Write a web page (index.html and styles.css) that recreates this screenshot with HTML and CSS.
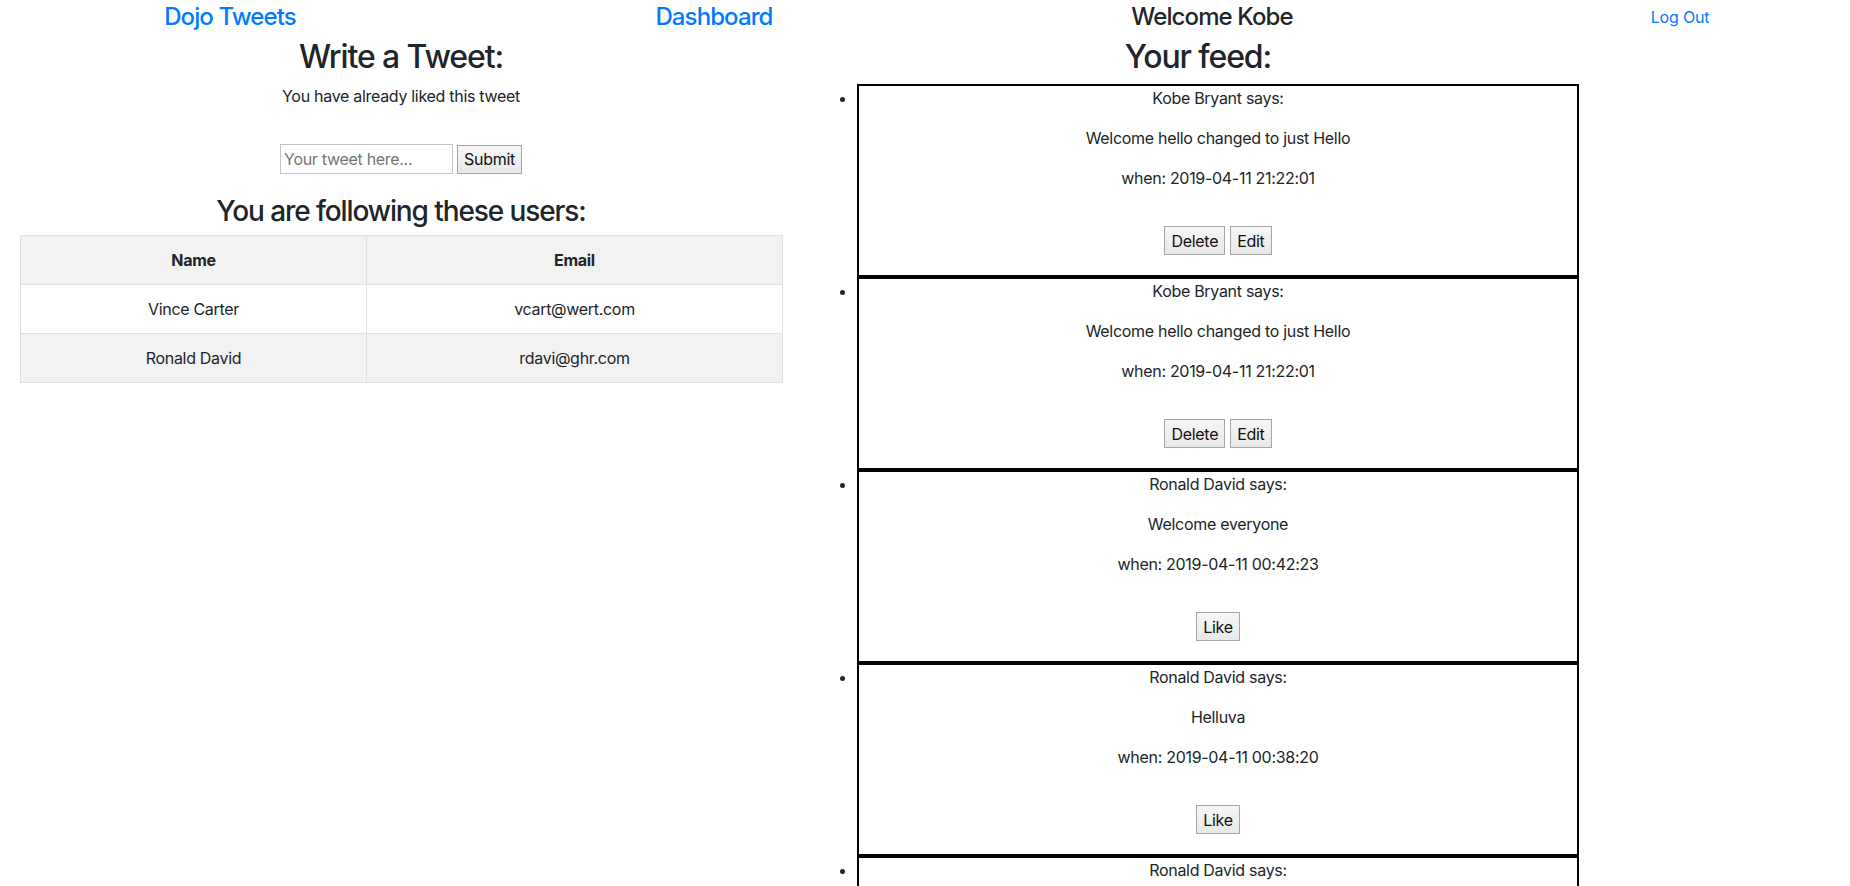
FILE: index.html
```html
<!DOCTYPE html>
<html lang="en">
<head>
<meta charset="utf-8">
<title>Dojo Tweets - Dashboard</title>
<link rel="stylesheet" href="styles.css">
</head>
<body>
<header class="topbar">
  <div class="nav-cell"><a class="brand" href="#">Dojo Tweets</a></div>
  <div class="nav-cell"><a class="brand" href="#">Dashboard</a></div>
  <div class="nav-cell"><span class="welcome">Welcome Kobe</span></div>
  <div class="nav-cell nav-cell-logout"><a class="logout" href="#">Log Out</a></div>
</header>
<main class="layout">
  <section class="left-col">
    <h2 class="title">Write a Tweet:</h2>
    <p class="notice">You have already liked this tweet</p>
    <form class="tweet-form">
      <input class="tweet-input" type="text" placeholder="Your tweet here...">
      <button class="btn" type="button">Submit</button>
    </form>
    <h3 class="subtitle">You are following these users:</h3>
    <table class="users">
      <colgroup><col class="col-name"><col class="col-email"></colgroup>
      <thead>
        <tr><th>Name</th><th>Email</th></tr>
      </thead>
      <tbody>
        <tr><td>Vince Carter</td><td>vcart@wert.com</td></tr>
        <tr class="shade"><td>Ronald David</td><td>rdavi@ghr.com</td></tr>
      </tbody>
    </table>
  </section>
  <section class="right-col">
    <h2 class="title">Your feed:</h2>
    <ul class="feed">
      <li class="tweet">
        <p>Kobe Bryant says:</p>
        <p>Welcome hello changed to just Hello</p>
        <p>when: 2019-04-11 21:22:01</p>
        <div class="actions"><button class="btn" type="button">Delete</button><button class="btn" type="button">Edit</button></div>
      </li>
      <li class="tweet">
        <p>Kobe Bryant says:</p>
        <p>Welcome hello changed to just Hello</p>
        <p>when: 2019-04-11 21:22:01</p>
        <div class="actions"><button class="btn" type="button">Delete</button><button class="btn" type="button">Edit</button></div>
      </li>
      <li class="tweet">
        <p>Ronald David says:</p>
        <p>Welcome everyone</p>
        <p>when: 2019-04-11 00:42:23</p>
        <div class="actions"><button class="btn" type="button">Like</button></div>
      </li>
      <li class="tweet">
        <p>Ronald David says:</p>
        <p>Helluva</p>
        <p>when: 2019-04-11 00:38:20</p>
        <div class="actions"><button class="btn" type="button">Like</button></div>
      </li>
      <li class="tweet">
        <p>Ronald David says:</p>
        <p>Hello</p>
        <p>when: 2019-04-11 00:30:00</p>
        <div class="actions"><button class="btn" type="button">Like</button></div>
      </li>
    </ul>
  </section>
</main>
</body>
</html>
```

FILE: styles.css
```css
* { box-sizing: border-box; }

html, body {
  margin: 0;
  padding: 0;
}

body {
  font-family: Inter, "Noto Sans", Roboto, sans-serif;
  font-size: 16px;
  line-height: 1.5;
  letter-spacing: -0.3px;
  color: #212529;
  background: #ffffff;
}

a { color: #007bff; text-decoration: none; }

.topbar {
  display: grid;
  grid-template-columns: 460px 508px 488px 394px;
  align-items: center;
  padding-top: 3px;
  margin-bottom: 6px;
}

.nav-cell {
  text-align: center;
  font-size: 24px;
  line-height: 1.2;
  font-weight: 500;
  letter-spacing: -0.9px;
}

.nav-cell-logout {
  padding-left: 54px;
  font-size: 16px;
  font-weight: 400;
  line-height: 1.5;
  letter-spacing: -0.2px;
}

.welcome { color: #212529; }

.layout {
  display: flex;
  align-items: flex-start;
}

.left-col {
  width: 802px;
  padding: 0 20px;
  text-align: center;
}

.right-col {
  width: 792px;
  text-align: center;
}

.title {
  font-size: 32px;
  font-weight: 500;
  line-height: 1.2;
  letter-spacing: -1.1px;
  margin: 0 0 8px;
}

.subtitle {
  font-size: 28px;
  font-weight: 500;
  line-height: 1.2;
  letter-spacing: -1.1px;
  margin: 21px 0 6px;
}

.notice {
  margin: 0;
}

.tweet-form {
  display: flex;
  justify-content: center;
  align-items: center;
  gap: 4px;
  margin: 36px 0 0;
  height: 30px;
}

.tweet-input {
  width: 173px;
  height: 30px;
  border: 1px solid #c4c4c4;
  padding: 1px 3px;
  font-family: inherit;
  font-size: 16px;
  letter-spacing: inherit;
  color: #212529;
}

.tweet-input::placeholder { color: #757575; }

.btn {
  height: 29px;
  padding: 0 6px;
  font-family: inherit;
  font-size: 16px;
  letter-spacing: inherit;
  color: #111;
  background: linear-gradient(#f6f6f6, #e8e8e8);
  border: 1px solid #a6a6a6;
  border-radius: 0;
}

.users {
  width: 762px;
  border-collapse: collapse;
  table-layout: fixed;
  margin: 0;
}

.col-name { width: 346px; }
.col-email { width: 416px; }

.users th,
.users td {
  border: 1px solid #dee2e6;
  padding: 12px;
  line-height: 24px;
  text-align: center;
}

.users th {
  font-weight: 700;
  background: #f2f2f2;
}

.users tr.shade td { background: #f2f2f2; }

.feed {
  margin: 0 15px;
  padding: 0 0 0 40px;
  text-align: center;
}

.tweet {
  border: 2px solid #000;
}

.tweet p {
  margin: 0 0 16px;
}

.actions {
  display: flex;
  justify-content: center;
  gap: 5px;
  padding: 20px 0;
}
```
